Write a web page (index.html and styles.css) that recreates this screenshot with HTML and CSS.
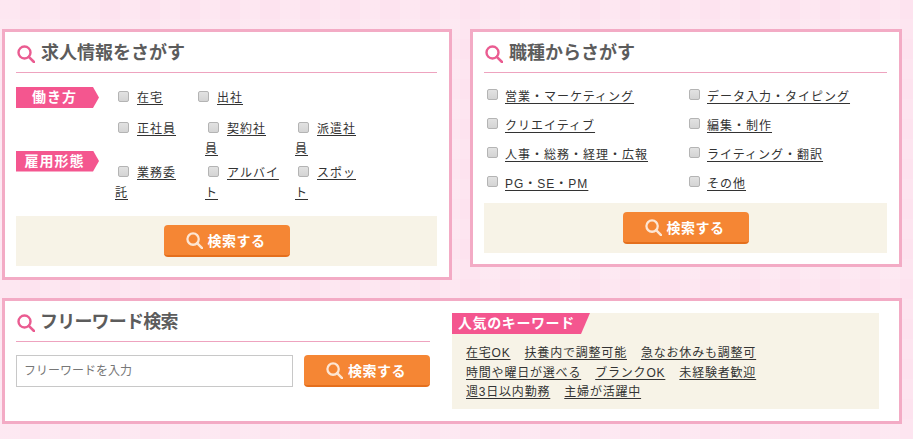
FILE: index.html
```html
<!DOCTYPE html>
<html lang="ja">
<head>
<meta charset="utf-8">
<title>求人情報をさがす</title>
<link rel="stylesheet" href="styles.css">
</head>
<body>
<svg class="defs" width="0" height="0" aria-hidden="true"><defs><symbol id="search" viewBox="0 0 18 18"><circle cx="7.5" cy="7.5" r="6" fill="none" stroke="currentColor" stroke-width="2.4"/><path d="M11.8 11.8 17 17" fill="none" stroke="currentColor" stroke-width="2.6" stroke-linecap="round"/></symbol></defs></svg>
<main class="page">
  <div class="top-row">
    <section class="card card-work">
      <h2 class="heading"><svg class="heading-icon"><use href="#search"/></svg>求人情報をさがす</h2>
      <div class="filter filter-first">
        <div class="tag-arrow">働き方</div>
        <div class="options options-short">
          <label class="opt"><input type="checkbox"><a href="#">在宅</a></label>
          <label class="opt"><input type="checkbox"><a href="#">出社</a></label>
        </div>
      </div>
      <div class="filter filter-second">
        <div class="tag-arrow">雇用形態</div>
        <div class="options options-wide">
          <label class="opt"><input type="checkbox"><a href="#">正社員</a></label>
          <label class="opt"><input type="checkbox"><a href="#">契約社<br>員</a></label>
          <label class="opt"><input type="checkbox"><a href="#">派遣社<br>員</a></label>
          <label class="opt"><input type="checkbox"><a href="#">業務委<br>託</a></label>
          <label class="opt"><input type="checkbox"><a href="#">アルバイ<br>ト</a></label>
          <label class="opt"><input type="checkbox"><a href="#">スポッ<br>ト</a></label>
        </div>
      </div>
      <div class="action"><button class="btn" type="button"><svg class="btn-icon"><use href="#search"/></svg>検索する</button></div>
    </section>
    <section class="card card-job">
      <h2 class="heading"><svg class="heading-icon"><use href="#search"/></svg>職種からさがす</h2>
      <div class="jobs">
        <label class="opt"><input type="checkbox"><a href="#">営業・マーケティング</a></label>
        <label class="opt"><input type="checkbox"><a href="#">データ入力・タイピング</a></label>
        <label class="opt"><input type="checkbox"><a href="#">クリエイティブ</a></label>
        <label class="opt"><input type="checkbox"><a href="#">編集・制作</a></label>
        <label class="opt"><input type="checkbox"><a href="#">人事・総務・経理・広報</a></label>
        <label class="opt"><input type="checkbox"><a href="#">ライティング・翻訳</a></label>
        <label class="opt"><input type="checkbox"><a href="#">PG・SE・PM</a></label>
        <label class="opt"><input type="checkbox"><a href="#">その他</a></label>
      </div>
      <div class="action"><button class="btn" type="button"><svg class="btn-icon"><use href="#search"/></svg>検索する</button></div>
    </section>
  </div>
  <section class="card card-free">
    <div class="free-left">
      <h2 class="heading heading-tight"><svg class="heading-icon"><use href="#search"/></svg>フリーワード検索</h2>
      <div class="free-form">
        <input class="free-input" type="text" placeholder="フリーワードを入力">
        <button class="btn" type="button"><svg class="btn-icon"><use href="#search"/></svg>検索する</button>
      </div>
    </div>
    <div class="popular">
      <div class="tag-slant">人気のキーワード</div>
      <div class="keywords">
        <a href="#">在宅OK</a><a href="#">扶養内で調整可能</a><a href="#">急なお休みも調整可</a>
        <a href="#">時間や曜日が選べる</a><a href="#">ブランクOK</a><a href="#">未経験者歓迎</a>
        <a href="#">週3日以内勤務</a><a href="#">主婦が活躍中</a>
      </div>
    </div>
  </section>
</main>
</body>
</html>
```
FILE: styles.css
```css
* { box-sizing: border-box; }
html, body { margin: 0; height: 100%; }
body {
  font-family: "Liberation Sans", "Noto Sans CJK JP", sans-serif;
  font-size: 12px;
  color: #333;
  overflow: hidden;
  background-color: #fde3ef;
  background-image:
    repeating-linear-gradient(90deg, rgba(255,255,255,.14) 0 20px, rgba(255,255,255,0) 20px 40px),
    repeating-linear-gradient(0deg, rgba(255,255,255,.08) 0 20px, rgba(255,255,255,0) 20px 40px);
}
.defs { position: absolute; }
.page { width: 900px; margin-left: 2px; padding-top: 29px; }
.top-row { display: flex; align-items: flex-start; gap: 18px; }
.card { background: #fff; border: 3px solid #f3abc5; padding: 0 12px 0 11px; }
.card-work { width: 450px; padding-bottom: 11px; }
.card-job { width: 432px; padding-bottom: 11px; }
.card-free { margin-top: 18px; height: 126px; display: flex; gap: 22px; }
.heading {
  margin: 0;
  height: 41px;
  padding: 1px 0 0 1px;
  display: flex;
  align-items: center;
  gap: 6px;
  border-bottom: 1px solid #eea3bf;
  font-size: 18px;
  line-height: 24px;
  font-weight: 700;
  color: #5c5c5c;
}
.heading-tight { letter-spacing: -.8px; gap: 5px; }
.heading-icon { width: 18px; height: 18px; color: #ea5c91; flex: none; margin-top: 3px; }
.filter { display: flex; align-items: center; }
.filter-first { margin-top: 14px; }
.filter-second { margin-top: 11px; }
.tag-arrow {
  width: 83px;
  height: 21px;
  margin-right: 16px;
  padding-right: 6px;
  flex: none;
  background: #f4568f;
  clip-path: polygon(0 0, 77px 0, 100% 50%, 77px 100%, 0 100%);
  color: #fff;
  font-size: 14px;
  font-weight: 700;
  letter-spacing: 1px;
  line-height: 20px;
  text-align: center;
}
.options { display: grid; }
.options-short { grid-template-columns: repeat(2, 80px); }
.options-wide { grid-template-columns: repeat(3, 90px); row-gap: 4px; }
.opt { display: block; line-height: 20px; letter-spacing: 1px; white-space: nowrap; }
.opt input {
  appearance: none;
  width: 11px;
  height: 11px;
  margin: 0 8px 0 3px;
  vertical-align: 0;
  border: 1px solid #b4b4b4;
  border-radius: 2px;
  background: linear-gradient(#e2e2e2, #d4d4d4);
}
a { color: #333; text-decoration: underline; text-underline-offset: 2px; }
.jobs { display: grid; grid-template-columns: 202px 201px; padding-top: 10px; }
.jobs .opt { height: 29px; line-height: 29px; }
.jobs input { margin-right: 7px; vertical-align: 1px; }
.action { margin-top: 13px; height: 50px; padding-top: 9px; background: #f7f3e7; display: flex; justify-content: center; }
.card-job .action { margin-top: 4px; }
.btn {
  width: 126px;
  height: 32px;
  padding: 0 2px 0 0;
  border: 0;
  border-bottom: 2px solid #e46f1d;
  border-radius: 4px;
  background: #f58634;
  color: #fff;
  font-family: inherit;
  font-size: 14px;
  font-weight: 700;
  letter-spacing: .5px;
  display: flex;
  align-items: center;
  justify-content: center;
  gap: 5px;
}
.btn-icon { width: 17px; height: 17px; color: #fde6d4; flex: none; }
.free-left { width: 414px; flex: none; }
.free-form { display: flex; gap: 11px; margin-top: 13px; }
.free-input {
  width: 277px;
  height: 32px;
  padding: 0 7px;
  border: 1px solid #c8c8c8;
  background: #fff;
  font-family: inherit;
  font-size: 12px;
}
.free-input::placeholder { color: #777; opacity: 1; }
.popular { width: 427px; height: 96px; margin-top: 12px; background: #f7f3e7; }
.tag-slant {
  width: 138px;
  height: 21px;
  padding-left: 6px;
  background: #f4568f;
  clip-path: polygon(0 0, 100% 0, 129px 100%, 0 100%);
  color: #fff;
  font-size: 14px;
  font-weight: 700;
  letter-spacing: .6px;
  line-height: 20px;
}
.keywords {
  display: flex;
  flex-wrap: wrap;
  column-gap: 14px;
  width: 310px;
  padding: 10px 0 0 14px;
  line-height: 19.5px;
  letter-spacing: .8px;
}
```
